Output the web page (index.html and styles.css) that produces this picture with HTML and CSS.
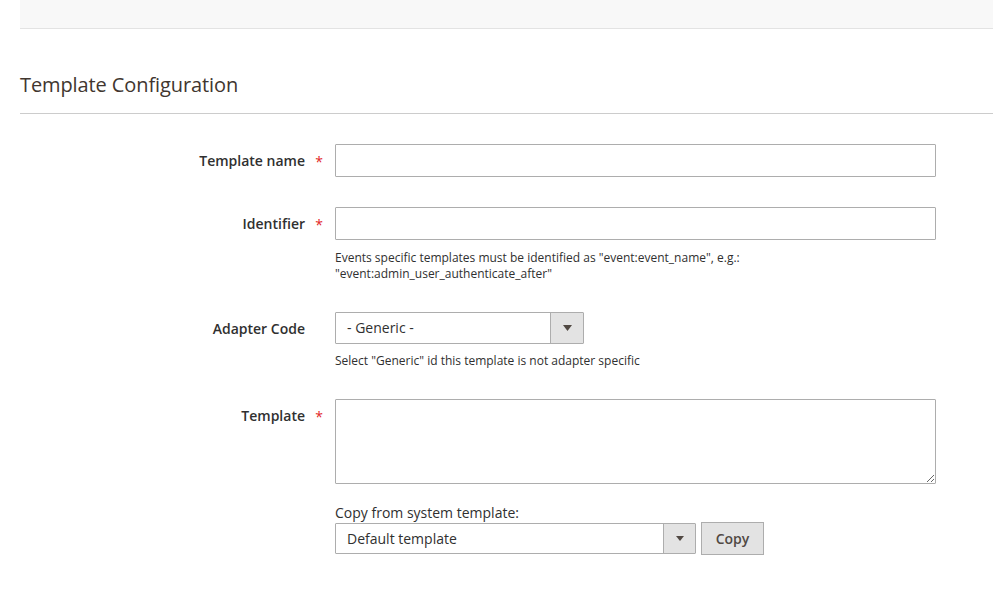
FILE: index.html
```html
<!DOCTYPE html>
<html>
<head>
<meta charset="utf-8">
<link rel="stylesheet" href="styles.css">
</head>
<body>
<div class="page">
  <div class="topbar"></div>
  <div class="section">
    <h2 class="legend">Template Configuration</h2>
    <div class="form">
      <div class="field">
        <label class="label required">Template name</label>
        <div class="control">
          <input class="input" type="text">
        </div>
      </div>
      <div class="field">
        <label class="label required">Identifier</label>
        <div class="control">
          <input class="input" type="text">
          <div class="note">Events specific templates must be identified as "event:event_name", e.g.:<br>"event:admin_user_authenticate_after"</div>
        </div>
      </div>
      <div class="field">
        <label class="label">Adapter Code</label>
        <div class="control">
          <div class="select adapter">
            <span class="select-value">- Generic -</span>
            <span class="select-arrow"><svg width="9" height="6" viewBox="0 0 9 6"><path d="M0 0H9L4.5 6Z" fill="#514943"/></svg></span>
          </div>
          <div class="note note-select">Select "Generic" id this template is not adapter specific</div>
        </div>
      </div>
      <div class="field">
        <label class="label required">Template</label>
        <div class="control">
          <textarea class="textarea"></textarea>
          <div class="copy-label">Copy from system template:</div>
          <div class="copy-row">
            <div class="select system">
              <span class="select-value">Default template</span>
              <span class="select-arrow"><svg width="8" height="5" viewBox="0 0 8 5"><path d="M0 0H8L4 5Z" fill="#514943"/></svg></span>
            </div>
            <button class="button">Copy</button>
          </div>
        </div>
      </div>
    </div>
  </div>
</div>
</body>
</html>
```

FILE: styles.css
```css
* { box-sizing: border-box; }
html, body { margin: 0; padding: 0; background: #fff; }
body {
  font-family: "Open Sans", "Liberation Sans", sans-serif;
  color: #303030;
  font-size: 14px;
}
.page { padding-left: 20px; }
.topbar {
  height: 29px;
  background: #f8f8f8;
  border-bottom: 1px solid #e3e3e3;
}
.section { padding-top: 42px; }
.legend {
  margin: 0;
  font-size: 20px;
  font-weight: 400;
  line-height: 28px;
  letter-spacing: -0.1px;
  color: #41362f;
  padding-bottom: 14px;
  border-bottom: 1px solid #cccccc;
}
.form { padding-top: 30px; display: flex; flex-direction: column; gap: 30px; }
.field { display: flex; align-items: flex-start; }
.label {
  width: 315px;
  flex: none;
  text-align: right;
  font-weight: 600;
  font-size: 14px;
  line-height: 19px;
  padding-top: 7px;
  padding-right: 30px;
  position: relative;
  color: #303030;
}
.label.required::after {
  content: "*";
  position: absolute;
  right: 12px;
  top: 8px;
  color: #e22626;
  font-size: 14px;
  font-weight: 400;
}
.control { width: 601px; flex: none; }
.input {
  display: block;
  width: 601px;
  height: 33px;
  border: 1px solid #adadad;
  border-radius: 1px;
  background: #fff;
  margin: 0;
  padding: 0 10px;
  font: inherit;
}
.note {
  font-size: 12px;
  line-height: 16px;
  margin-top: 10px;
  color: #303030;
}
.note-select { margin-top: 9px; }
.select {
  display: flex;
  height: 32px;
  border: 1px solid #adadad;
  border-radius: 1px;
  background: #fff;
}
.select.adapter { width: 249px; }
.select.system { width: 361px; height: 31px; }
.select-value {
  flex: 1;
  padding-left: 11px;
  line-height: 29px;
  font-size: 14px;
  color: #303030;
}
.select-arrow {
  width: 33px;
  flex: none;
  background: #e3e3e3;
  border-left: 1px solid #adadad;
  display: flex;
  align-items: center;
  justify-content: center;
}
.system .select-arrow { width: 32px; }
.textarea {
  display: block;
  width: 601px;
  height: 85px;
  border: 1px solid #adadad;
  border-radius: 1px;
  margin: 0;
  font: inherit;
  resize: vertical;
}
.copy-label {
  margin-top: 19px;
  font-size: 14px;
  line-height: 19px;
}
.copy-row { display: flex; align-items: center; gap: 5px; }
.button {
  height: 33px;
  width: 63px;
  background: #e3e3e3;
  border: 1px solid #adadad;
  border-radius: 0;
  font-family: "Open Sans", "Liberation Sans", sans-serif;
  font-weight: 600;
  font-size: 14px;
  color: #514943;
  padding: 0;
  margin: 0;
}
```
